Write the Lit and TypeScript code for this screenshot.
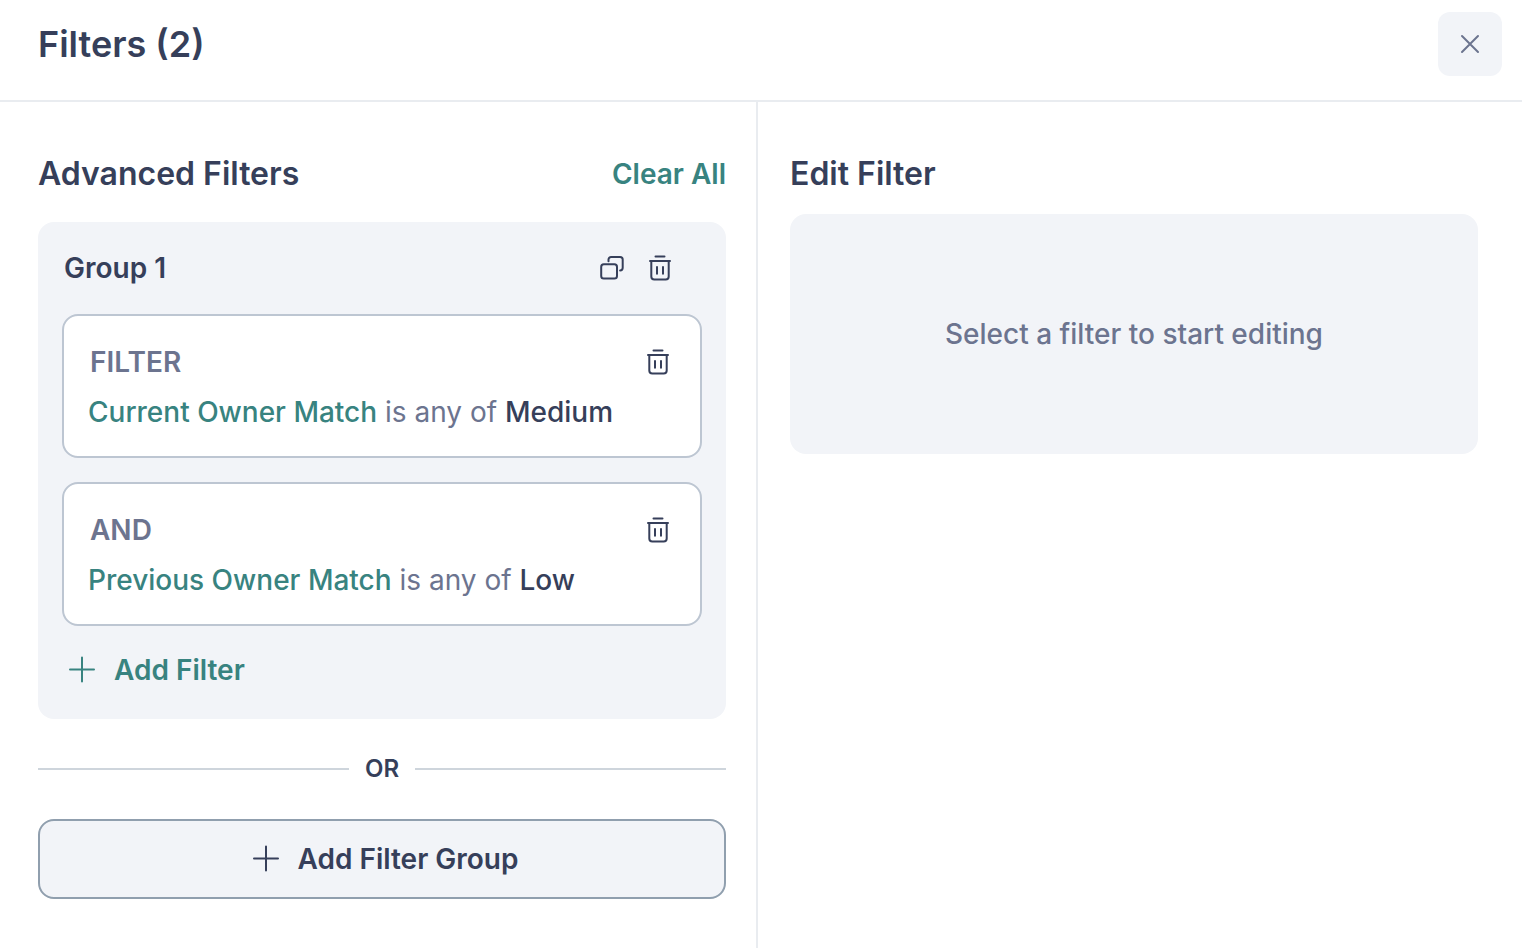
import { LitElement, html, css, svg } from "lit";
import { customElement, property, state } from "lit/decorators.js";

interface Filter {
  id: number;
  field: string;
  operator: string;
  value: string;
}

const trashIcon = html`<svg class="icon" viewBox="0 0 32 32" aria-hidden="true">
  ${svg`<path d="M11.5 4.5h9M6 9.1h20M7.3 9.1v15.3a3 3 0 0 0 3 3h11.4a3 3 0 0 0 3-3V9.1M13 15v6.8M19 15v6.8"/>`}
</svg>`;

const copyIcon = html`<svg class="icon" viewBox="0 0 32 32" aria-hidden="true">
  ${svg`<rect x="5.2" y="12.3" width="15.8" height="14.3" rx="2.6"/>
  <path d="M12.5 9.2V7.6a2.6 2.6 0 0 1 2.6-2.6h9a2.6 2.6 0 0 1 2.6 2.6v8.2a2.6 2.6 0 0 1-2.6 2.6"/>`}
</svg>`;

const plusIcon = html`<svg class="icon" viewBox="0 0 32 32" aria-hidden="true">
  ${svg`<path d="M16 3.6v24M4 15.6h24"/>`}
</svg>`;

const closeIcon = html`<svg class="icon" viewBox="0 0 32 32" aria-hidden="true">
  ${svg`<path d="M8 8l16 16M24 8L8 24"/>`}
</svg>`;

const shared = css`
  * {
    box-sizing: border-box;
  }
  button {
    margin: 0;
    padding: 0;
    border: 0;
    background: none;
    color: inherit;
    font: inherit;
    cursor: pointer;
  }
  .icon {
    display: block;
    flex: none;
    width: 32px;
    height: 32px;
    fill: none;
    stroke: currentColor;
    stroke-width: 2;
    stroke-linecap: round;
    stroke-linejoin: round;
  }
  .icon-button {
    display: grid;
    place-items: center;
    flex: none;
    width: 44px;
    height: 44px;
    color: #363f5a;
  }
`;

@customElement("filter-card")
export class FilterCard extends LitElement {
  @property({ attribute: false }) filter!: Filter;
  @property() label = "";

  static styles = [
    shared,
    css`
      :host {
        display: block;
      }
      .card {
        padding: 24px 20px 22px 24px;
        border: 2px solid #bdc6d2;
        border-radius: 16px;
        background: #fff;
      }
      .top {
        display: flex;
        align-items: center;
        justify-content: space-between;
        margin-bottom: 6px;
        padding-left: 2px;
      }
      .label {
        color: #6c748f;
        font-weight: 600;
      }
      .rule {
        margin: 0;
        line-height: 44px;
        color: #6c748f;
      }
      .field {
        color: #388380;
        font-weight: 500;
      }
      .value {
        color: #363f5a;
        font-weight: 500;
      }
    `,
  ];

  private remove() {
    this.dispatchEvent(new CustomEvent("remove-filter", { detail: this.filter.id }));
  }

  render() {
    const { field, operator, value } = this.filter;
    return html`<article class="card">
      <div class="top">
        <span class="label">${this.label}</span>
        <button class="icon-button" type="button" aria-label="Delete filter" @click=${this.remove}>${trashIcon}</button>
      </div>
      <p class="rule"><span class="field">${field}</span> ${operator} <span class="value">${value}</span></p>
    </article>`;
  }
}

@customElement("app-root")
export class AppRoot extends LitElement {
  @state() private filters: Filter[] = [
    { id: 1, field: "Current Owner Match", operator: "is any of", value: "Medium" },
    { id: 2, field: "Previous Owner Match", operator: "is any of", value: "Low" },
  ];

  static styles = [
    shared,
    css`
      :host {
        display: flex;
        flex-direction: column;
        min-height: 100vh;
        background: #fff;
        color: #363f5a;
        font-family: Inter, "Liberation Sans", sans-serif;
        font-size: 28px;
        line-height: 40px;
      }
      h1,
      h2,
      h3 {
        margin: 0;
        font-weight: 600;
      }
      h1 {
        font-size: 36px;
      }
      h2 {
        font-size: 32px;
      }
      h3 {
        font-size: 28px;
      }
      .header {
        display: flex;
        align-items: center;
        justify-content: space-between;
        padding: 12px 20px 24px 38px;
        border-bottom: 2px solid #e9ecf0;
      }
      .close {
        display: grid;
        place-items: center;
        width: 64px;
        height: 64px;
        border-radius: 12px;
        background: #f2f4f8;
        color: #6c748f;
      }
      .body {
        flex: 1;
        display: grid;
        grid-template-columns: 1fr 1fr;
        padding: 0 44px 0 38px;
      }
      .list {
        padding: 52px 30px 48px 0;
        border-right: 2px solid #e9ecf0;
      }
      .editor {
        padding: 52px 0 48px 32px;
      }
      .section-head {
        display: flex;
        align-items: center;
        justify-content: space-between;
        margin-bottom: 28px;
      }
      .clear {
        color: #388380;
        font-weight: 600;
      }
      .group {
        display: flex;
        flex-direction: column;
        gap: 24px;
        padding: 24px 24px 29px;
        border-radius: 16px;
        background: #f2f4f8;
      }
      .group-head {
        display: flex;
        align-items: center;
        gap: 4px;
        padding: 0 20px 0 2px;
      }
      .group-name {
        flex: 1;
      }
      .add {
        display: flex;
        align-items: center;
        justify-content: center;
        gap: 16px;
        padding-left: 4px;
        font-weight: 600;
      }
      .add-filter {
        align-self: flex-start;
        color: #388380;
      }
      .or {
        display: flex;
        align-items: center;
        gap: 16px;
        margin: 34px 0;
        font-size: 24px;
        line-height: 32px;
        font-weight: 600;
      }
      .or::before,
      .or::after {
        content: "";
        flex: 1;
        height: 2px;
        background: #ced5dc;
      }
      .add-group {
        width: 100%;
        height: 80px;
        border: 2px solid #909fae;
        border-radius: 16px;
        background: #f2f4f8;
      }
      .empty {
        display: grid;
        place-items: center;
        min-height: 240px;
        margin-top: 20px;
        border-radius: 16px;
        background: #f2f4f8;
        color: #6c748f;
        font-weight: 500;
      }
    `,
  ];

  private removeFilter(e: CustomEvent<number>) {
    this.filters = this.filters.filter((f) => f.id !== e.detail);
  }

  private clear() {
    this.filters = [];
  }

  render() {
    return html`
      <header class="header">
        <h1>Filters (${this.filters.length})</h1>
        <button class="close" type="button" aria-label="Close">${closeIcon}</button>
      </header>
      <main class="body">
        <section class="list">
          <div class="section-head">
            <h2>Advanced Filters</h2>
            <button class="clear" type="button" @click=${this.clear}>Clear All</button>
          </div>
          <div class="group">
            <div class="group-head">
              <h3 class="group-name">Group 1</h3>
              <button class="icon-button" type="button" aria-label="Duplicate group">${copyIcon}</button>
              <button class="icon-button" type="button" aria-label="Delete group" @click=${this.clear}>${trashIcon}</button>
            </div>
            ${this.filters.map(
              (f, i) => html`<filter-card
                .filter=${f}
                .label=${i === 0 ? "FILTER" : "AND"}
                @remove-filter=${this.removeFilter}
              ></filter-card>`
            )}
            <button class="add add-filter" type="button">${plusIcon}<span>Add Filter</span></button>
          </div>
          <div class="or">OR</div>
          <button class="add add-group" type="button">${plusIcon}<span>Add Filter Group</span></button>
        </section>
        <section class="editor">
          <h2>Edit Filter</h2>
          <div class="empty">Select a filter to start editing</div>
        </section>
      </main>
    `;
  }
}
